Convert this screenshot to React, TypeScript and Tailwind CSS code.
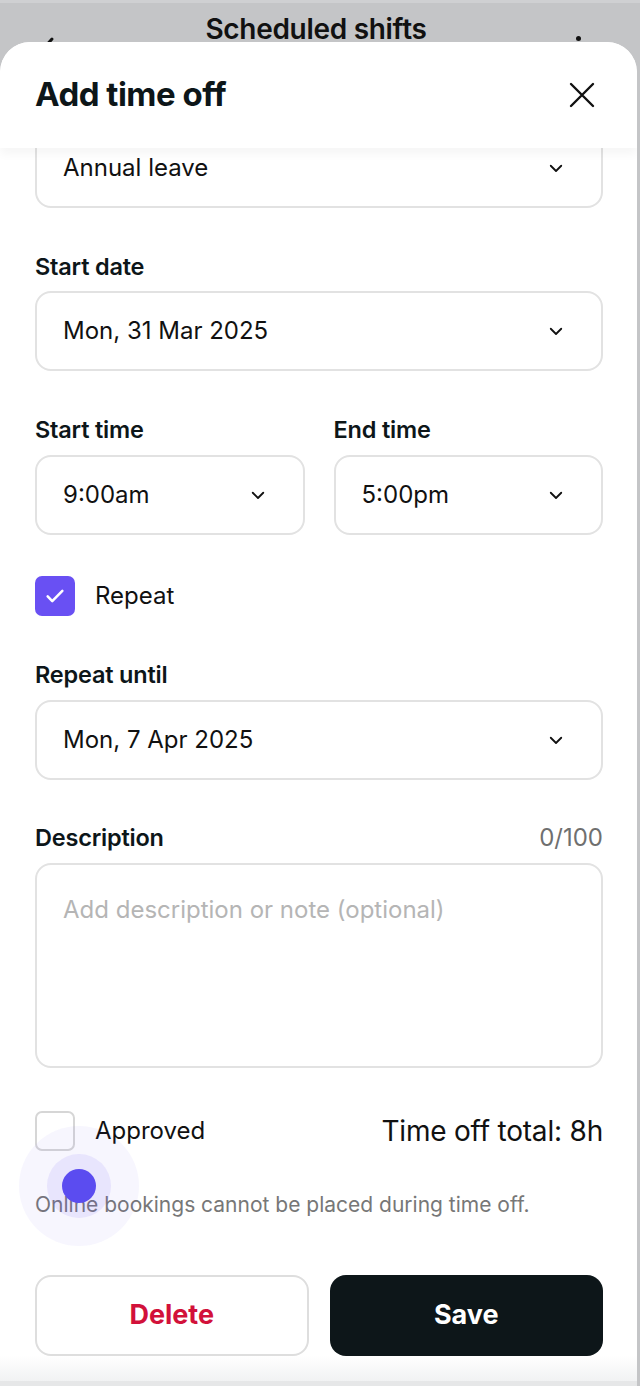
import React from 'react';

const font = { fontFamily: 'Inter, "Noto Sans", sans-serif' };

const Chevron = () => (
    <svg width="18" height="18" viewBox="0 0 24 24" fill="none" stroke="#111" strokeWidth="2.4" strokeLinecap="round" strokeLinejoin="round">
        <path d="M5 9l7 7 7-7" />
    </svg>
);

const Select = ({ value, className = '' }: { value: string; className?: string }) => (
    <div className={`h-[80px] rounded-[16px] border-2 border-[#e2e2e2] bg-white flex items-center justify-between pl-[26px] pr-[36px] ${className}`}>
        <span className="text-[24px] text-[#111]">{value}</span>
        <Chevron />
    </div>
);

const Label = ({ children, right }: { children: React.ReactNode; right?: string }) => (
    <div className="h-[30px] flex items-center justify-between">
        <span className="text-[23.5px] font-semibold text-[#0d1619] tracking-[-0.2px]">{children}</span>
        {right && <span className="text-[24px] text-[#6f6f6f]">{right}</span>}
    </div>
);

export default function App() {
    return (
        <div className="h-[1386px] w-[640px] overflow-hidden bg-[#c4c5c7] relative" style={font}>
            {/* Page behind the sheet */}
            <div className="h-[3px] bg-[#cfd0d2]" />
            <div className="h-[81px] flex justify-between px-[40px]">
                <svg width="16" height="26" viewBox="0 0 16 26" fill="none" stroke="#111" strokeWidth="3" strokeLinecap="round" className="mt-[33px]">
                    <path d="M12 3L3 13l9 10" />
                </svg>
                <span className="text-[28px] font-semibold text-[#111] mt-[5px] tracking-[-0.3px]">Scheduled shifts</span>
                <div className="flex flex-col gap-[5px] mt-[33px] mr-[19px]">
                    <span className="w-[5px] h-[5px] rounded-full bg-[#111]" />
                    <span className="w-[5px] h-[5px] rounded-full bg-[#111]" />
                    <span className="w-[5px] h-[5px] rounded-full bg-[#111]" />
                </div>
            </div>

            {/* Sheet */}
            <div className="absolute left-0 top-[42px] w-[637px] h-[1344px] bg-white rounded-t-[30px] flex flex-col overflow-hidden">
                <div className="relative z-10 h-[106px] shrink-0 bg-white rounded-t-[30px] flex items-center justify-between pl-[35px] pr-[42px] shadow-[0_6px_10px_rgba(0,0,0,0.04)]">
                    <span className="text-[33px] font-bold text-[#0d1619] tracking-[-0.5px]">Add time off</span>
                    <svg width="26" height="26" viewBox="0 0 26 26" fill="none" stroke="#111" strokeWidth="2.4" strokeLinecap="round">
                        <path d="M2 2l22 22M24 2L2 24" />
                    </svg>
                </div>

                <div className="flex-1 overflow-hidden px-[35px] pr-[34px]">
                    <div className="-mt-[20px] flex flex-col">
                        <Select value="Annual leave" />

                        <div className="mt-[44px]">
                            <Label>Start date</Label>
                            <Select value="Mon, 31 Mar 2025" className="mt-[9px]" />
                        </div>

                        <div className="mt-[44px] grid grid-cols-2 gap-[29px]">
                            <div>
                                <Label>Start time</Label>
                                <Select value="9:00am" className="mt-[10px]" />
                            </div>
                            <div>
                                <Label>End time</Label>
                                <Select value="5:00pm" className="mt-[10px]" />
                            </div>
                        </div>

                        <div className="mt-[41px] h-[40px] flex items-center gap-[20px]">
                            <div className="w-[40px] h-[40px] rounded-[7px] bg-[#6950f3] flex items-center justify-center">
                                <svg width="22" height="22" viewBox="0 0 24 24" fill="none" stroke="#fff" strokeWidth="2.8" strokeLinecap="round" strokeLinejoin="round">
                                    <path d="M4 12.5l5 5L20 6.5" />
                                </svg>
                            </div>
                            <span className="text-[24px] text-[#111]">Repeat</span>
                        </div>

                        <div className="mt-[44px]">
                            <Label>Repeat until</Label>
                            <Select value="Mon, 7 Apr 2025" className="mt-[10px]" />
                        </div>

                        <div className="mt-[43px]">
                            <Label right="0/100">Description</Label>
                            <div className="mt-[10px] h-[205px] rounded-[16px] border-2 border-[#e2e2e2] px-[26px] pt-[27px]">
                                <span className="text-[24px] text-[#b5b5b5]">Add description or note (optional)</span>
                            </div>
                        </div>

                        <div className="mt-[43px] h-[40px] flex items-center justify-between">
                            <div className="flex items-center gap-[20px]">
                                <div className="w-[40px] h-[40px] rounded-[7px] border-2 border-[#d6d6d6] bg-white" />
                                <span className="text-[24px] text-[#111]">Approved</span>
                            </div>
                            <span className="text-[28px] leading-[40px] text-[#111] tracking-[-0.2px]">Time off total: 8h</span>
                        </div>

                        <p className="mt-[39px] h-[30px] leading-[30px] text-[21px] text-[#777]">Online bookings cannot be placed during time off.</p>

                        <div className="mt-[55px] grid grid-cols-2 gap-[21px]">
                            <button className="h-[81px] rounded-[16px] border-2 border-[#dedede] bg-white text-[27px] font-bold text-[#d2113a]">Delete</button>
                            <button className="h-[81px] rounded-[16px] bg-[#0d1619] text-[27px] font-bold text-white">Save</button>
                        </div>
                    </div>
                </div>
                <div className="h-[30px] shrink-0 bg-gradient-to-b from-white to-[#f1f2f3] border-b-[5px] border-[#e6e7e8]" />
            </div>

            {/* Touch indicator */}
            <div className="absolute left-[19px] top-[1126px] w-[120px] h-[120px] rounded-full bg-[#6950f3]/[0.05] flex items-center justify-center pointer-events-none">
                <div className="w-[64px] h-[64px] rounded-full bg-[#6950f3]/[0.1] flex items-center justify-center">
                    <div className="w-[34px] h-[34px] rounded-full bg-[#5b4cf0]" />
                </div>
            </div>
        </div>
    );
}
